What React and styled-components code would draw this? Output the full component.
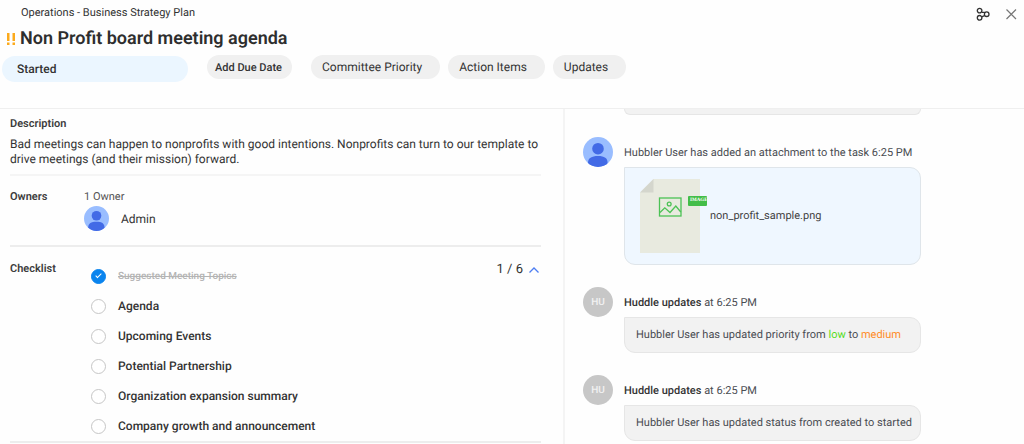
import React, { useState } from "react";
import styled, { createGlobalStyle } from "styled-components";

const GlobalStyle = createGlobalStyle`
  *, *::before, *::after { box-sizing: border-box; }
  body {
    margin: 0;
    background: #fefefe;
    color: #333;
    font-family: Roboto, "Liberation Sans", sans-serif;
    font-size: 12px;
    text-rendering: geometricPrecision;
    overflow: hidden;
  }
  h1, h2, p, ul { margin: 0; padding: 0; }
  button { font: inherit; color: inherit; border: 0; background: none; padding: 0; cursor: pointer; text-rendering: inherit; }
`;

const Page = styled.div`
  display: flex;
  flex-direction: column;
  height: 100vh;
`;

const Header = styled.header`
  display: flex;
  justify-content: space-between;
  padding: 5px 6px 26px 2px;
  border-bottom: 1px solid #efefef;
`;

const Breadcrumb = styled.p`
  padding-left: 19px;
  font-size: 11px;
  line-height: 16px;
`;

const Title = styled.h1`
  display: flex;
  align-items: center;
  gap: 4px;
  padding-left: 4px;
  margin: 5px 0 4px;
  font-size: 18px;
  line-height: 25px;
  font-weight: 600;
  color: #2e2e2e;
`;

const Toolbar = styled.div`
  display: flex;
  align-items: flex-start;
  gap: 19px;
`;

const Tabs = styled.nav`
  display: flex;
  gap: 8px;
`;

const Pill = styled.button`
  height: 24px;
  padding: 0 ${(p) => p.$end || 15}px 0 ${(p) => p.$start || 11}px;
  border-radius: 12px;
  background: #f0f0f0;
  font-size: ${(p) => p.$size || 12}px;
  font-weight: ${(p) => p.$weight || 400};
  white-space: nowrap;
`;

const StatusPill = styled(Pill)`
  width: 186px;
  height: 26px;
  margin-top: 1px;
  padding-left: 15px;
  border-radius: 13px;
  background: #ebf6ff;
  font-weight: 500;
  text-align: left;
`;

const Actions = styled.div`
  display: flex;
  align-items: flex-start;
  gap: 14px;
  padding-top: 2px;
  button { display: flex; }
`;

const Body = styled.main`
  flex: 1;
  min-height: 0;
  display: grid;
  grid-template-columns: 565fr 459fr;
`;

const Details = styled.div`
  padding: 0 22px 0 10px;
  border-right: 2px solid #f4f4f4;
`;

const Section = styled.section`
  display: ${(p) => (p.$stacked ? "block" : "flex")};
  padding: ${(p) => p.$pad};
  border-bottom: 2px solid ${(p) => (p.$stacked ? "#f5f5f5" : "#ededed")};
`;

const Label = styled.h2`
  width: 74px;
  flex: none;
  font-size: 11px;
  line-height: 16px;
  font-weight: 600;
  color: #3c3c3c;
`;

const Copy = styled.p`
  margin-top: 5px;
  font-size: 12px;
  line-height: 15px;
`;

const OwnerCount = styled.p`
  font-size: 11px;
  line-height: 16px;
  color: #555;
`;

const Owner = styled.div`
  display: flex;
  align-items: center;
  gap: 12px;
  margin-top: 1px;
  font-size: 12px;
`;

const Checklist = styled.ul`
  flex: 1;
  padding-left: 7px;
  list-style: none;
`;

const CheckRow = styled.li`
  label {
    display: flex;
    align-items: center;
    gap: 12px;
    height: 30px;
    font-size: ${(p) => (p.$done ? 10 : 12)}px;
    font-weight: 500;
    color: ${(p) => (p.$done ? "#b4b4b4" : "#333")};
    text-decoration: ${(p) => (p.$done ? "line-through" : "none")};
    cursor: pointer;
  }
`;

const Tick = styled.input`
  appearance: none;
  width: 15px;
  height: 15px;
  margin: 0;
  border: 1px solid #c6c6c6;
  border-radius: 50%;
  background: #fff;
  &:checked {
    border-color: #0a84ee;
    background: #0a84ee;
  }
  &:checked::after {
    content: "";
    display: block;
    width: 3px;
    height: 6px;
    margin: 2px auto 0;
    border: solid #fff;
    border-width: 0 1px 1px 0;
    transform: rotate(45deg);
  }
`;

const Progress = styled.button`
  display: flex;
  align-items: center;
  align-self: flex-start;
  gap: 6px;
  padding-right: 2px;
  font-size: 13px;
  line-height: 18px;
`;

const Feed = styled.section`
  padding-left: 18px;
  overflow: hidden;
`;

const Entry = styled.article`
  margin-bottom: 22px;
`;

const EntryHead = styled.header`
  display: flex;
  align-items: center;
  gap: 11px;
  height: 30px;
  font-size: 11px;
  color: #4a4d52;
  white-space: nowrap;
  strong { font-weight: 500; color: #333; }
`;

const Initials = styled.span`
  display: grid;
  place-items: center;
  width: 30px;
  height: 30px;
  border-radius: 50%;
  background: #c7c7c7;
  color: #f2f2f2;
  font-size: 10px;
  font-weight: 500;
`;

const Bubble = styled.div`
  width: 297px;
  margin-left: 41px;
  padding: 0 11px;
  border: 1px solid #e6e6e6;
  border-radius: 0 11px 11px 11px;
  background: #f2f2f2;
  font-size: 11px;
  line-height: 34px;
  color: #4a4d52;
  white-space: nowrap;
`;

const BubbleEnd = styled(Bubble)`
  height: 6px;
  margin-bottom: 22px;
  border-top: 0;
  border-radius: 0 0 10px 10px;
`;

const Attachment = styled(Bubble)`
  display: flex;
  align-items: center;
  gap: 3px;
  height: 98px;
  padding: 0 15px;
  border-color: #dfe5ea;
  background: #eff7ff;
  a { color: #444; text-decoration: none; }
`;

const FileThumb = styled.div`
  position: relative;
  width: 67px;
  height: 74px;
`;

const TypeBadge = styled.span`
  position: absolute;
  top: 17px;
  right: 0;
  width: 19px;
  height: 10px;
  padding-left: 2px;
  border-radius: 1px;
  overflow: hidden;
  background: #43bd48;
  color: #fff;
  font: bold 5px/10px "Liberation Serif", serif;
`;

const Accent = styled.span`
  color: ${(p) => p.$color};
`;

function Person({ size }) {
  return (
    <svg width={size} height={size} viewBox="0 0 30 30" aria-hidden="true">
      <clipPath id={`disc${size}`}><circle cx="15" cy="15" r="15" /></clipPath>
      <g clipPath={`url(#disc${size})`}>
        <rect width="30" height="30" fill="#99bdff" />
        <circle cx="15" cy="11.7" r="5.8" fill="#426ae6" />
        <path d="M5 26c0-5 3.5-7 10-7s9.600 2 9.600 7v2L15 32l-10-4z" fill="#426ae6" />
      </g>
    </svg>
  );
}

function UrgentMark() {
  return (
    <svg width="10" height="14" viewBox="0 0 10 14" aria-hidden="true" fill="#fcaa1c">
      <path d="M1 1h2.500v8H1zM6.500 1H9v8H6.500zM1 10.500h2.500V13H1zM6.500 10.500H9V13H6.500z" />
    </svg>
  );
}

function ShareIcon() {
  return (
    <svg width="14" height="14" viewBox="0 0 14 14" fill="none" stroke="#333" strokeWidth="1.300">
      <circle cx="3.600" cy="3.600" r="2.300" />
      <circle cx="10.700" cy="7.200" r="2.300" />
      <circle cx="3.600" cy="10.800" r="2.300" />
      <path d="M5.700 5.400h2.600l.8.400M5.700 9.800l2.800-1.200" />
    </svg>
  );
}

function CloseIcon() {
  return (
    <svg width="14" height="14" viewBox="0 0 14 14" stroke="#777" strokeWidth="1.200">
      <path d="M2.500 2.500l9.500 9.500M12 2.500L2.500 12" />
    </svg>
  );
}

function FileIcon() {
  return (
    <svg width="60" height="74" viewBox="0 0 60 74" fill="none" aria-hidden="true">
      <path d="M13.500 0H60v74H0V13.500z" fill="#e8eadf" />
      <path d="M13.500 0v13.500H0z" fill="#d4d6cd" />
      <g stroke="#4cc255" strokeWidth="1.300">
        <rect x="19.500" y="19" width="21.500" height="18" />
        <circle cx="29.200" cy="25" r="1.900" />
        <path d="M20 33.500l4.800-4.700 5.200 4.700 5.800-6.500 5 6" />
      </g>
    </svg>
  );
}

const topics = [
  "Suggested Meeting Topics",
  "Agenda",
  "Upcoming Events",
  "Potential Partnership",
  "Organization expansion summary",
  "Company growth and announcement",
];

function Update({ children }) {
  return (
    <Entry>
      <EntryHead>
        <Initials>HU</Initials>
        <span><strong>Huddle updates</strong> at 6:25 PM</span>
      </EntryHead>
      <Bubble>{children}</Bubble>
    </Entry>
  );
}

export default function App() {
  const [done, setDone] = useState([0]);
  const toggle = (i) =>
    setDone((list) => (list.includes(i) ? list.filter((n) => n !== i) : [...list, i]));

  return (
    <>
      <GlobalStyle />
      <Page>
        <Header>
          <div>
            <Breadcrumb>Operations - Business Strategy Plan</Breadcrumb>
            <Title><UrgentMark />Non Profit board meeting agenda</Title>
            <Toolbar>
              <StatusPill>Started</StatusPill>
              <Pill $size={11} $weight={500} $start={8} $end={10}>Add Due Date</Pill>
              <Tabs>
                <Pill $end={18}>Committee Priority</Pill>
                <Pill $end={18}>Action Items</Pill>
                <Pill $end={18}>Updates</Pill>
              </Tabs>
            </Toolbar>
          </div>
          <Actions>
            <button aria-label="Share"><ShareIcon /></button>
            <button aria-label="Close"><CloseIcon /></button>
          </Actions>
        </Header>
        <Body>
          <Details>
            <Section $stacked $pad="7px 0 7px">
              <Label>Description</Label>
              <Copy>
                Bad meetings can happen to nonprofits with good intentions. Nonprofits can turn to our template to drive meetings (and their mission) forward.
              </Copy>
            </Section>
            <Section $pad="13px 0 14px">
              <Label>Owners</Label>
              <div>
                <OwnerCount>1 Owner</OwnerCount>
                <Owner><Person size={25} />Admin</Owner>
              </div>
            </Section>
            <Section $pad="14px 0 0">
              <Label>Checklist</Label>
              <Checklist>
                {topics.map((topic, i) => (
                  <CheckRow key={topic} $done={done.includes(i)}>
                    <label>
                      <Tick type="checkbox" checked={done.includes(i)} onChange={() => toggle(i)} />
                      {topic}
                    </label>
                  </CheckRow>
                ))}
              </Checklist>
              <Progress aria-label="Collapse checklist">
                {done.length} / {topics.length}
                <svg width="10" height="6" viewBox="0 0 10 6" fill="none" stroke="#4d7df2" strokeWidth="1.300">
                  <path d="M0.500 5.500L5 1l4.500 4.500" />
                </svg>
              </Progress>
            </Section>
          </Details>
          <Feed>
            <BubbleEnd />
            <Entry>
              <EntryHead>
                <Person size={30} />
                <span>Hubbler User has added an attachment to the task 6:25 PM</span>
              </EntryHead>
              <Attachment>
                <FileThumb><FileIcon /><TypeBadge>IMAGE</TypeBadge></FileThumb>
                <a href="#file">non_profit_sample.png</a>
              </Attachment>
            </Entry>
            <Update>
              Hubbler User has updated priority from <Accent $color="#52dc18">low</Accent> to <Accent $color="#ff8c28">medium</Accent>
            </Update>
            <Update>Hubbler User has updated status from created to started</Update>
          </Feed>
        </Body>
      </Page>
    </>
  );
}
